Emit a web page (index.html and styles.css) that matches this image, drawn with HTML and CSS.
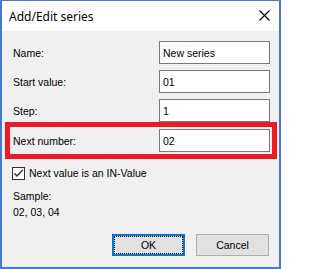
FILE: index.html
```html
<!DOCTYPE html>
<html>
<head>
<meta charset="utf-8">
<link rel="stylesheet" href="styles.css">
</head>
<body>
<div class="window">
  <div class="titlebar">
    <span class="title">Add/Edit series</span>
    <svg class="close" width="11" height="11" viewBox="0 0 11 11"><path d="M0.5 0.5 L10.5 10.5 M10.5 0.5 L0.5 10.5" stroke="#000" stroke-width="1.1" fill="none"/></svg>
  </div>
  <div class="content">
    <div class="form">
      <div class="row"><span class="label">Name:</span><input class="field" value="New series" readonly></div>
      <div class="row"><span class="label">Start value:</span><input class="field" value="01" readonly></div>
      <div class="row"><span class="label">Step:</span><input class="field" value="1" readonly></div>
      <div class="row row-next"><span class="label">Next number:</span><input class="field" value="02" readonly></div>
    </div>
    <div class="check-row">
      <svg class="checkbox" width="13" height="13" viewBox="0 0 13 13"><rect x="0.5" y="0.5" width="12" height="12" fill="#fff" stroke="#333"/><path d="M2.3 6.2 L5 9 L10.8 2.8" stroke="#333" stroke-width="1.4" fill="none"/></svg>
      <span class="check-label">Next value is an IN-Value</span>
    </div>
    <div class="sample">
      <div class="sample-line">Sample:</div>
      <div class="sample-line">02, 03, 04</div>
    </div>
    <div class="buttons">
      <button class="btn btn-default">OK</button>
      <button class="btn">Cancel</button>
    </div>
  </div>
  <div class="highlight"></div>
</div>
</body>
</html>
```
FILE: styles.css
```css
html, body {
  margin: 0;
  padding: 0;
  background: #ffffff;
}
.window {
  position: relative;
  width: 281px;
  height: 269px;
  box-sizing: border-box;
  border-style: solid;
  border-color: #4a78c8;
  border-width: 1px 2px 2px 2px;
  background: #f0f0f0;
  display: flex;
  flex-direction: column;
  font-family: "Liberation Sans", Arial, sans-serif;
  font-size: 10.5px;
  color: #000;
}
.titlebar {
  height: 30px;
  background: #ffffff;
  display: flex;
  align-items: center;
  justify-content: space-between;
  padding: 0 9px 0 7px;
  flex-shrink: 0;
}
.title {
  font-family: "Noto Sans", "Open Sans", sans-serif;
  font-size: 12px;
  color: #000;
  margin-top: 1px;
}
.close {
  display: block;
  margin-top: -1px;
}
.content {
  flex: 1;
  padding: 10px 9px 0 11px;
  display: flex;
  flex-direction: column;
}
.form {
  display: flex;
  flex-direction: column;
  gap: 6px;
}
.row {
  display: flex;
  align-items: center;
  justify-content: space-between;
  height: 23px;
}
.row-next {
  margin-top: 1px;
}
.label {
  white-space: nowrap;
}
.field {
  width: 111px;
  height: 23px;
  box-sizing: border-box;
  border: 1px solid #7a7a7a;
  background: #fff;
  padding: 0 3px;
  margin: 0;
  font-family: "Liberation Sans", Arial, sans-serif;
  font-size: 10.5px;
  color: #000;
  outline: none;
}
.check-row {
  display: flex;
  align-items: center;
  margin-top: 15px;
  margin-left: -1px;
  height: 13px;
}
.checkbox {
  display: block;
  flex-shrink: 0;
}
.check-label {
  margin-left: 4px;
  margin-top: -1px;
}
.sample {
  margin-top: 8px;
}
.sample-line {
  line-height: 16px;
}
.buttons {
  margin-top: 14px;
  margin-right: 1px;
  display: flex;
  justify-content: flex-end;
  gap: 11px;
}
.btn {
  width: 73px;
  height: 22px;
  box-sizing: border-box;
  background: #e1e1e1;
  border: 1px solid #adadad;
  font-family: "Liberation Sans", Arial, sans-serif;
  font-size: 10.5px;
  color: #000;
  padding: 0;
  margin: 0;
}
.btn-default {
  border: 2px solid #0078d7;
  outline: 1px dotted #000;
  outline-offset: -3px;
}
.highlight {
  position: absolute;
  left: 3px;
  top: 121px;
  width: 272px;
  height: 37px;
  box-sizing: border-box;
  border: 5px solid #ed1c24;
  pointer-events: none;
}
```
